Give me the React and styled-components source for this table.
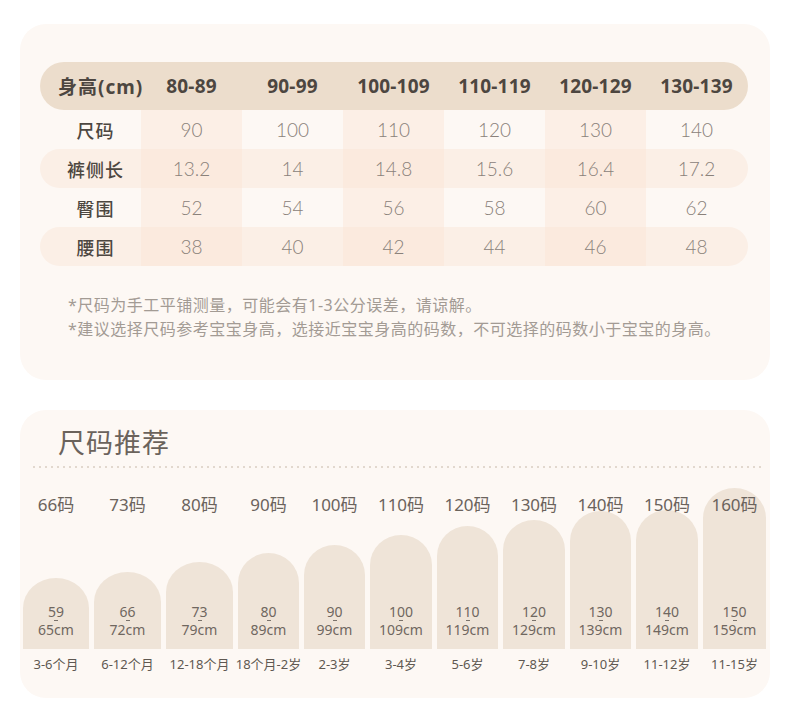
import styled, { createGlobalStyle } from "styled-components";

const GlobalStyle = createGlobalStyle`
  body {
    margin: 0;
    background: #ffffff;
    font-family: "Noto Sans", "Noto Sans CJK SC", sans-serif;
  }
`;

const Page = styled.div`
  width: 790px;
  padding: 24px 20px 19px;
  box-sizing: border-box;
  display: flex;
  flex-direction: column;
  gap: 30px;
`;

const Card = styled.section`
  background: #fdf8f4;
  border-radius: 26px;
  box-sizing: border-box;
  height: ${(p) => p.h}px;
`;

const TableCard = styled(Card)`
  padding: 38px 22px 0 20px;
`;

const Table = styled.div`
  display: flex;
  flex-direction: column;
`;

const HeadRow = styled.div`
  display: grid;
  grid-template-columns: 101px repeat(6, 101px);
  height: 48px;
  align-items: center;
  background: #ecddcc;
  border-radius: 24px;
  color: #4d4640;
  font-weight: 700;
  font-size: 19px;
`;

const HeadLabel = styled.div`
  padding-left: 18px;
  white-space: nowrap;
  letter-spacing: 1px;
`;

const HeadCell = styled.div`
  text-align: center;
  letter-spacing: 0.2px;
`;

const Row = styled.div`
  display: grid;
  grid-template-columns: 101px repeat(6, 101px);
  height: 39px;
  background: ${(p) => (p.striped ? "#fbefe6" : "transparent")};
  border-radius: 20px;
`;

const Label = styled.div`
  display: flex;
  align-items: center;
  justify-content: center;
  padding-left: 10px;
  font-size: 18px;
  font-weight: 500;
  color: #4d4741;
  letter-spacing: 1px;
`;

const Cell = styled.div`
  display: flex;
  align-items: center;
  justify-content: center;
  font-family: "Lato", "Noto Sans", sans-serif;
  font-weight: 300;
  font-size: 19px;
  color: #8a817a;
  background: ${(p) => (p.tinted ? "rgba(250, 228, 212, 0.45)" : "transparent")};
`;

const Notes = styled.div`
  margin-top: 27px;
  padding-left: 28px;
  color: #a39b94;
  font-size: 16px;
  line-height: 24px;
  letter-spacing: 0.5px;
`;

const RecCard = styled(Card)`
  padding: 15px 3px 0 3px;
  display: flex;
  flex-direction: column;
`;

const Title = styled.h2`
  margin: 0 0 5px 35px;
  font-size: 27px;
  line-height: 36px;
  font-weight: 400;
  color: #6b635c;
  letter-spacing: 1px;
`;

const Divider = styled.div`
  height: 2px;
  margin: 0 2px 0 10px;
  background-image: linear-gradient(to right, #e2d8ce 2px, transparent 2px);
  background-size: 6px 2px;
`;

const Chart = styled.div`
  display: flex;
  gap: 5px;
  margin-top: 19px;
`;

const Column = styled.div`
  width: ${(p) => p.w}px;
  display: flex;
  flex-direction: column;
  align-items: center;
`;

const Stack = styled.div`
  width: 100%;
  height: 162px;
  display: grid;
`;

const SizeLabel = styled.div`
  grid-area: 1 / 1;
  align-self: start;
  justify-self: center;
  margin-top: 6px;
  font-size: 17px;
  line-height: 24px;
  color: #6b635c;
  white-space: nowrap;
  z-index: 1;
`;

const Arch = styled.div`
  grid-area: 1 / 1;
  align-self: end;
  height: ${(p) => p.h}px;
  background: #efe4d8;
  border-radius: 50% 50% 0 0 / 30px 30px 0 0;
  display: flex;
  flex-direction: column;
  justify-content: flex-end;
  align-items: center;
  padding-bottom: 10px;
  box-sizing: border-box;
  color: #6f6760;
  font-size: 14px;
  line-height: 18px;
`;

const Dash = styled.span`
  width: 4px;
  height: 1px;
  background: #7a726b;
  margin: -1px 0 0;
`;

const Age = styled.div`
  margin-top: 5px;
  font-size: 13px;
  line-height: 20px;
  color: #5f5851;
  white-space: nowrap;
`;

const heads = ["80-89", "90-99", "100-109", "110-119", "120-129", "130-139"];
const rows = [
  { label: "尺码", values: ["90", "100", "110", "120", "130", "140"] },
  { label: "裤侧长", values: ["13.2", "14", "14.8", "15.6", "16.4", "17.2"] },
  { label: "臀围", values: ["52", "54", "56", "58", "60", "62"] },
  { label: "腰围", values: ["38", "40", "42", "44", "46", "48"] },
];

const sizes = [
  { size: "66码", from: "59", to: "65", age: "3-6个月", w: 66, h: 71 },
  { size: "73码", from: "66", to: "72", age: "6-12个月", w: 67, h: 77 },
  { size: "80码", from: "73", to: "79", age: "12-18个月", w: 67, h: 87 },
  { size: "90码", from: "80", to: "89", age: "18个月-2岁", w: 61, h: 96 },
  { size: "100码", from: "90", to: "99", age: "2-3岁", w: 61, h: 104 },
  { size: "110码", from: "100", to: "109", age: "3-4岁", w: 62, h: 114 },
  { size: "120码", from: "110", to: "119", age: "5-6岁", w: 61, h: 123 },
  { size: "130码", from: "120", to: "129", age: "7-8岁", w: 62, h: 129 },
  { size: "140码", from: "130", to: "139", age: "9-10岁", w: 61, h: 138 },
  { size: "150码", from: "140", to: "149", age: "11-12岁", w: 62, h: 139 },
  { size: "160码", from: "150", to: "159", age: "11-15岁", w: 63, h: 161 },
];

const App = () => {
  return (
    <Page>
      <GlobalStyle />
      <TableCard h={356}>
        <Table>
          <HeadRow>
            <HeadLabel>身高(cm)</HeadLabel>
            {heads.map((h) => (
              <HeadCell key={h}>{h}</HeadCell>
            ))}
          </HeadRow>
          {rows.map((r, i) => (
            <Row key={r.label} striped={i % 2 === 1}>
              <Label>{r.label}</Label>
              {r.values.map((v, j) => (
                <Cell key={j} tinted={j % 2 === 0}>
                  {v}
                </Cell>
              ))}
            </Row>
          ))}
        </Table>
        <Notes>
          <div>*尺码为手工平铺测量，可能会有1-3公分误差，请谅解。</div>
          <div>*建议选择尺码参考宝宝身高，选接近宝宝身高的码数，不可选择的码数小于宝宝的身高。</div>
        </Notes>
      </TableCard>
      <RecCard h={288}>
        <Title>尺码推荐</Title>
        <Divider />
        <Chart>
          {sizes.map((s) => (
            <Column key={s.size} w={s.w}>
              <Stack>
                <SizeLabel>{s.size}</SizeLabel>
                <Arch h={s.h}>
                  <span>{s.from}</span>
                  <Dash />
                  <span>{s.to}cm</span>
                </Arch>
              </Stack>
              <Age>{s.age}</Age>
            </Column>
          ))}
        </Chart>
      </RecCard>
    </Page>
  );
};

export default App;
